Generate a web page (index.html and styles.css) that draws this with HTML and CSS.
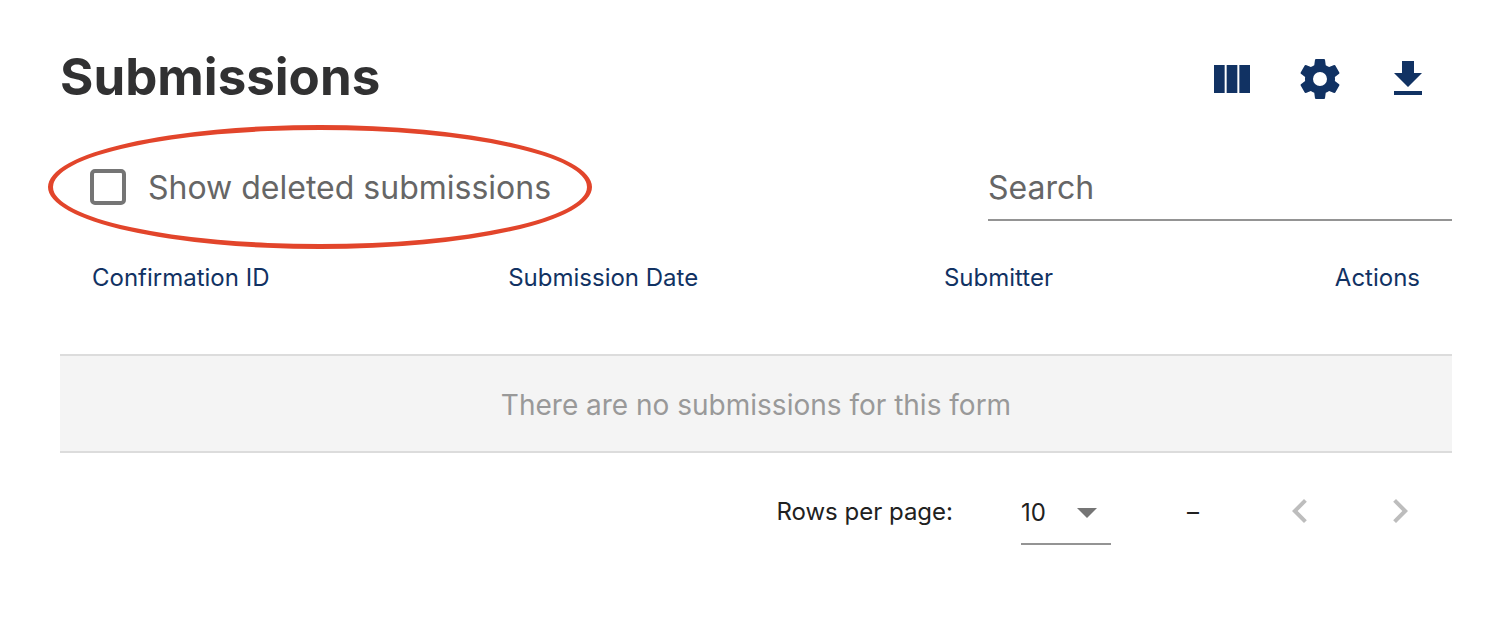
FILE: index.html
```html
<!DOCTYPE html>
<html lang="en">
<head>
<meta charset="utf-8">
<title>Submissions</title>
<link rel="stylesheet" href="styles.css">
</head>
<body>
<main class="page">
  <header class="header">
    <h1 class="title">Submissions</h1>
    <div class="actions">
      <button class="icon-btn" type="button" aria-label="Select columns">
        <svg class="icon" viewBox="0 0 24 24"><path d="M14.67 5V19H9.33V5H14.67M15.67 19H21V5H15.67V19M8.33 19V5H3V19H8.33Z"/></svg>
      </button>
      <button class="icon-btn" type="button" aria-label="Manage form">
        <svg class="icon" viewBox="0 0 24 24"><path d="M12,15.5A3.5,3.5 0 0,1 8.5,12A3.5,3.5 0 0,1 12,8.5A3.5,3.5 0 0,1 15.5,12A3.5,3.5 0 0,1 12,15.5M19.43,12.97C19.47,12.65 19.5,12.33 19.5,12C19.5,11.67 19.47,11.34 19.43,11L21.54,9.37C21.73,9.22 21.78,8.95 21.66,8.73L19.66,5.27C19.54,5.05 19.27,4.96 19.05,5.05L16.56,6.05C16.04,5.66 15.5,5.32 14.87,5.07L14.5,2.42C14.46,2.18 14.25,2 14,2H10C9.75,2 9.54,2.18 9.5,2.42L9.13,5.07C8.5,5.32 7.96,5.66 7.44,6.05L4.95,5.05C4.73,4.96 4.46,5.05 4.34,5.27L2.34,8.73C2.21,8.95 2.27,9.22 2.46,9.37L4.57,11C4.53,11.34 4.5,11.67 4.5,12C4.5,12.33 4.53,12.65 4.57,12.97L2.46,14.63C2.27,14.78 2.21,15.05 2.34,15.27L4.34,18.73C4.46,18.95 4.73,19.03 4.95,18.95L7.44,17.94C7.96,18.34 8.5,18.68 9.13,18.93L9.5,21.58C9.54,21.82 9.75,22 10,22H14C14.25,22 14.46,21.82 14.5,21.58L14.87,18.93C15.5,18.67 16.04,18.34 16.56,17.94L19.05,18.95C19.27,19.03 19.54,18.95 19.66,18.73L21.66,15.27C21.78,15.05 21.73,14.78 21.54,14.63L19.43,12.97Z"/></svg>
      </button>
      <button class="icon-btn" type="button" aria-label="Export submissions">
        <svg class="icon" viewBox="0 0 24 24"><path d="M5,20H19V18H5M19,9H15V3H9V9H5L12,16L19,9Z"/></svg>
      </button>
    </div>
  </header>

  <div class="filters">
    <div class="deleted">
      <input class="checkbox" type="checkbox" id="show-deleted">
      <label for="show-deleted">Show deleted submissions</label>
      <span class="highlight" aria-hidden="true"></span>
    </div>
    <input class="search" type="search" aria-label="Search" placeholder="Search">
  </div>

  <table class="table">
    <colgroup>
      <col class="col-id">
      <col class="col-date">
      <col class="col-user">
      <col>
    </colgroup>
    <thead>
      <tr>
        <th scope="col">Confirmation ID</th>
        <th scope="col">Submission Date</th>
        <th scope="col">Submitter</th>
        <th class="end" scope="col">Actions</th>
      </tr>
    </thead>
    <tbody>
      <tr><td class="empty" colspan="4">There are no submissions for this form</td></tr>
    </tbody>
  </table>

  <footer class="footer">
    <label for="rows">Rows per page:</label>
    <div class="select-wrap">
      <select class="select" id="rows">
        <option>10</option>
        <option>25</option>
        <option>50</option>
      </select>
      <svg class="icon caret" viewBox="0 0 24 24" aria-hidden="true"><path d="M7,10L12,15L17,10H7Z"/></svg>
    </div>
    <span class="range">–</span>
    <div class="pager">
      <button class="icon-btn" type="button" aria-label="Previous page" disabled>
        <svg class="icon" viewBox="0 0 24 24"><path d="M15.41,16.58L10.83,12L15.41,7.41L14,6L8,12L14,18L15.41,16.58Z"/></svg>
      </button>
      <button class="icon-btn" type="button" aria-label="Next page" disabled>
        <svg class="icon" viewBox="0 0 24 24"><path d="M8.59,16.58L13.17,12L8.59,7.41L10,6L16,12L10,18L8.59,16.58Z"/></svg>
      </button>
    </div>
  </footer>
</main>
</body>
</html>
```
FILE: styles.css
```css
* {
  box-sizing: border-box;
}

body {
  margin: 0;
  background: #fff;
  color: #212121;
  font-family: Inter, "Liberation Sans", sans-serif;
  font-size: 24px;
}

.page {
  padding: 39px 58px 40px 60px;
}

.header {
  display: flex;
  align-items: center;
  justify-content: space-between;
  padding-right: 8px;
}

.title {
  margin: 0;
  color: #313132;
  font-size: 51px;
  font-weight: 700;
  line-height: 72px;
}

.actions {
  display: flex;
  gap: 16px;
  padding-top: 4px;
}

.icon-btn {
  display: grid;
  place-items: center;
  width: 72px;
  height: 72px;
  padding: 0;
  border: 0;
  background: none;
  color: #113263;
}

.icon-btn:disabled {
  color: #bdbdbd;
}

.icon {
  width: 48px;
  height: 48px;
  fill: currentColor;
}

.filters {
  display: flex;
  align-items: center;
  justify-content: space-between;
  margin-top: 40px;
  color: #666;
  font-size: 32px;
  line-height: 64px;
}

.deleted {
  position: relative;
  display: flex;
  align-items: center;
  gap: 22px;
  padding-left: 30px;
}

.checkbox {
  appearance: none;
  width: 36px;
  height: 36px;
  margin: 0 0 2px;
  border: 4px solid #757575;
  border-radius: 5px;
}

.highlight {
  position: absolute;
  inset: -31px -41px -29px -12px;
  border: 5px solid #e2452b;
  border-radius: 50%;
  pointer-events: none;
}

.search {
  appearance: none;
  width: 33.333%;
  height: 66px;
  padding: 0;
  border: 0;
  border-bottom: 2px solid #949494;
  border-radius: 0;
  background: none;
  font: inherit;
}

.search::placeholder {
  color: #666;
  opacity: 1;
}

.table {
  width: 100%;
  margin-top: 33px;
  border-spacing: 0;
  table-layout: fixed;
}

.col-id {
  width: 29.9%;
}

.col-date {
  width: 31.3%;
}

.col-user {
  width: 20%;
}

.table th {
  padding: 0 32px 52px;
  color: #113263;
  font-weight: 400;
  line-height: 48px;
  text-align: left;
}

.table .end {
  text-align: right;
}

.table .empty {
  padding: 4px 32px 0;
  border: solid #dcdcdc;
  border-width: 2px 0;
  background: #f4f4f4;
  color: #999;
  font-size: 28px;
  line-height: 91px;
  text-align: center;
}

.footer {
  display: flex;
  align-items: center;
  justify-content: flex-end;
  margin-top: 22px;
  padding-right: 16px;
}

.select-wrap {
  display: grid;
  width: 90px;
  margin-left: 68px;
  padding-top: 4px;
}

.select {
  grid-area: 1 / 1;
  appearance: none;
  height: 64px;
  padding: 0;
  border: 0;
  border-bottom: 2px solid #949494;
  border-radius: 0;
  background: none;
  color: inherit;
  font: inherit;
}

.caret {
  grid-area: 1 / 1;
  place-self: center end;
  margin-bottom: 2px;
  color: #757575;
  pointer-events: none;
}

.range {
  margin: 0 65px 0 76px;
}

.pager {
  display: flex;
  gap: 28px;
}
```
